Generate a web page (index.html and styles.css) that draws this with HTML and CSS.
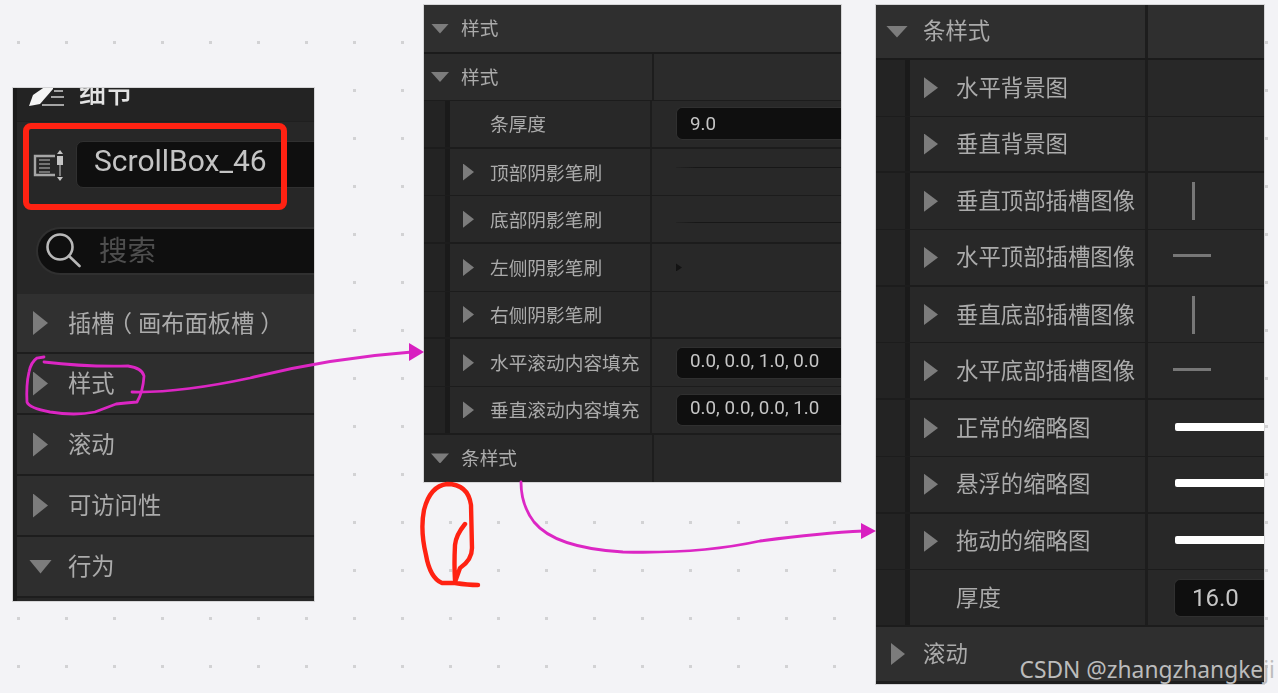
FILE: index.html
```html
<!DOCTYPE html>
<html lang="zh-CN">
<head>
<meta charset="utf-8">
<title>ScrollBox 样式</title>
<link rel="stylesheet" href="styles.css">
</head>
<body>
<main class="canvas">

  <section class="panel details">
    <header class="details-head">
      <svg class="edit-icon" viewBox="0 0 36 22" width="36" height="22"><path class="fill-white" d="M0 20 L4 9 L17 0 L24 0 L24 3 L11 18 L3 19.5 Z"/><path class="line-dim" d="M25 5H34M22 11H35M13 19H35"/></svg>
      <span class="details-title">细节</span>
    </header>
    <div class="name-row">
      <svg class="name-icon" viewBox="0 0 32 32" width="32" height="32"><path class="line-soft" d="M23 6H3V25H23"/><path class="line-soft thin" d="M7 10H18M7 14H18M7 18H18M7 22H18"/><rect class="fill-soft" x="25" y="6" width="6" height="9"/><path class="fill-soft" d="M28 0L31 4H25ZM28 31L31 27H25Z"/><path class="line-soft thin" d="M28 15V26"/></svg>
      <div class="name-field">ScrollBox_46</div>
    </div>
    <div class="search-row">
      <div class="search-field">
        <svg class="search-icon" viewBox="0 0 36 36" width="36" height="36"><circle class="search-ring" cx="15" cy="14" r="12.5"/><path class="search-ring" d="M24 23L34.5 33"/></svg>
        <span class="search-text">搜索</span>
      </div>
    </div>
    <div class="section first"><i class="tri-r"></i><span>插槽<em class="paren open">（</em>画布面板槽<em class="paren close">）</em></span></div>
    <div class="section"><i class="tri-r"></i><span>样式</span></div>
    <div class="section"><i class="tri-r"></i><span>滚动</span></div>
    <div class="section"><i class="tri-r"></i><span>可访问性</span></div>
    <div class="section"><i class="tri-d"></i><span>行为</span></div>
  </section>

  <section class="panel style-panel">
    <div class="row head full"><div class="label"><i class="tri-d"></i><span>样式</span></div></div>
    <div class="row sub"><div class="label"><i class="tri-d"></i><span>样式</span></div><div class="value"></div></div>
    <div class="row thick"><b class="gutter"></b><div class="label inner"><span>条厚度</span></div><div class="value"><div class="field">9.0</div></div></div>
    <div class="row"><b class="gutter"></b><div class="label inner"><i class="tri-r"></i><span>顶部阴影笔刷</span></div><div class="value"><hr class="shade top"></div></div>
    <div class="row thick"><b class="gutter"></b><div class="label inner"><i class="tri-r"></i><span>底部阴影笔刷</span></div><div class="value"><hr class="shade bottom"></div></div>
    <div class="row"><b class="gutter"></b><div class="label inner"><i class="tri-r"></i><span>左侧阴影笔刷</span></div><div class="value"><i class="shade-tip"></i></div></div>
    <div class="row thick"><b class="gutter"></b><div class="label inner"><i class="tri-r"></i><span>右侧阴影笔刷</span></div><div class="value"></div></div>
    <div class="row"><b class="gutter"></b><div class="label inner"><i class="tri-r"></i><span>水平滚动内容填充</span></div><div class="value"><div class="field padded">0.0, 0.0, 1.0, 0.0</div></div></div>
    <div class="row thick"><b class="gutter"></b><div class="label inner"><i class="tri-r"></i><span>垂直滚动内容填充</span></div><div class="value"><div class="field padded">0.0, 0.0, 0.0, 1.0</div></div></div>
    <div class="row sub last"><div class="label"><i class="tri-d"></i><span>条样式</span></div><div class="value"></div></div>
  </section>

  <section class="panel bar-panel">
    <div class="row head"><div class="label"><i class="tri-d"></i><span>条样式</span></div><div class="value"></div></div>
    <div class="row"><b class="gutter"></b><div class="label inner"><i class="tri-r"></i><span>水平背景图</span></div><div class="value"></div></div>
    <div class="row thick"><b class="gutter"></b><div class="label inner"><i class="tri-r"></i><span>垂直背景图</span></div><div class="value"></div></div>
    <div class="row"><b class="gutter"></b><div class="label inner"><i class="tri-r"></i><span>垂直顶部插槽图像</span></div><div class="value"><i class="slot-v"></i></div></div>
    <div class="row thick"><b class="gutter"></b><div class="label inner"><i class="tri-r"></i><span>水平顶部插槽图像</span></div><div class="value"><i class="slot-h"></i></div></div>
    <div class="row"><b class="gutter"></b><div class="label inner"><i class="tri-r"></i><span>垂直底部插槽图像</span></div><div class="value"><i class="slot-v"></i></div></div>
    <div class="row thick"><b class="gutter"></b><div class="label inner"><i class="tri-r"></i><span>水平底部插槽图像</span></div><div class="value"><i class="slot-h"></i></div></div>
    <div class="row"><b class="gutter"></b><div class="label inner"><i class="tri-r"></i><span>正常的缩略图</span></div><div class="value"><i class="thumb"></i></div></div>
    <div class="row thick"><b class="gutter"></b><div class="label inner"><i class="tri-r"></i><span>悬浮的缩略图</span></div><div class="value"><i class="thumb"></i></div></div>
    <div class="row"><b class="gutter"></b><div class="label inner"><i class="tri-r"></i><span>拖动的缩略图</span></div><div class="value"><i class="thumb"></i></div></div>
    <div class="row thick"><b class="gutter"></b><div class="label inner"><span>厚度</span></div><div class="value"><div class="field">16.0</div></div></div>
    <div class="row head foot full"><div class="label"><i class="tri-r"></i><span>滚动</span></div></div>
  </section>

  <svg class="marks" viewBox="0 0 1278 693" width="1278" height="693">
    <rect class="red-box" x="26" y="126" width="258" height="81" rx="5"/>
    <path class="pink" d="M44 357 L37 358 Q31 362 29 372 Q26 385 27 402 Q29 408 50 412 Q75 416 95 412 Q108 407 116 404 Q125 403 137 402 Q143 392 144 376 Q142 368 128 366 Q85 367 44 362"/>
    <path class="pink" d="M132 392 Q180 393 250 378 Q330 358 412 352"/>
    <path class="pink-head" d="M409 343 L424 352 L409 361 Z"/>
    <path class="pink" d="M521 482 Q521 505 534 522 Q555 548 623 552 Q700 554 760 541 Q820 533 864 531"/>
    <path class="pink-head" d="M861 523 L876 531 L861 539 Z"/>
    <path class="red-pen" d="M465 524 Q456 535 455 545 Q454 565 455 580 M472 548 Q472 560 460 568 L455 582 M442 583 Q430 578 426 555 Q420 530 424 510 Q430 486 447 484 Q468 484 471 505 L472 548 M442 583 L455 583 Q468 585 478 585"/>
  </svg>

  <div class="watermark">CSDN @zhangzhangkeji</div>
</main>
</body>
</html>
```

FILE: styles.css
```css
* { box-sizing: border-box; }
html, body { margin: 0; height: 100%; overflow: hidden; }
body { font-family: "Noto Sans CJK SC", "Noto Sans", sans-serif; }

.canvas {
  position: relative;
  width: 1278px;
  height: 693px;
  overflow: hidden;
  background-color: #f3f3f6;
  background-image: conic-gradient(from 0deg at 3px 3px, transparent 75%, #d2d2d4 0);
  background-size: 48px 48px;
  background-position: 17px 41px;
}

.panel {
  position: absolute;
  overflow: hidden;
  display: flex;
  flex-direction: column;
  background: #282828;
  color: #ababab;
  filter: blur(.35px);
  outline: 1px solid #9a9a9a55;
}

/* triangles */
.tri-r, .tri-d { display: block; flex: none; background: #7c7c7c; }
.tri-r { clip-path: polygon(0 0, 100% 50%, 0 100%); }
.tri-d { clip-path: polygon(0 0, 100% 0, 50% 100%); }

/* details panel */
.details {
  left: 13px; top: 88px; width: 301px; height: 513px;
  border-left: 4px solid #1b1b1b;
  background: #272727;
}
.details-head {
  height: 34px; flex: none;
  display: flex; align-items: flex-end;
  padding: 0 0 14px 12px;
  border-bottom: 1px solid #1f1f1f;
  background: #232323;
  color: #e4e4e4;
}
.edit-icon { flex: none; margin-bottom: -1px; }
.fill-white { fill: #f4f4f4; }
.line-dim { fill: none; stroke: #a4a4a4; stroke-width: 2.2; }
.details-title { margin-left: 14px; font-size: 27px; line-height: 27px; font-weight: 500; padding-bottom: 2px; }

.name-row { height: 85px; flex: none; display: flex; align-items: flex-start; padding: 19px 0 0 15px; }
.name-icon { flex: none; margin: 9px 12px 0 0; }
.line-soft { fill: none; stroke: #a6a6a6; stroke-width: 2.4; }
.line-soft.thin { stroke-width: 1.6; stroke: #8d8d8d; }
.fill-soft { fill: #c4c4c4; }
.name-field {
  flex: 1; height: 47px;
  margin-right: -6px;
  border: 1px solid #303030; border-radius: 7px 0 0 7px;
  background: #0f0f0f;
  padding-left: 17px;
  font: 400 30px/38px Roboto, sans-serif;
  color: #c4c4c4;
}

.search-row { height: 87px; flex: none; padding: 20px 0 0 19px; }
.search-field {
  height: 48px; margin-right: -4px;
  display: flex; align-items: center;
  padding-left: 7px;
  border: 2px solid #303030; border-right: 0;
  border-radius: 24px 0 0 24px;
  background: #0f0f0f;
}
.search-icon { flex: none; }
.search-ring { fill: none; stroke: #b8b8b8; stroke-width: 2.6; stroke-linecap: round; }
.search-text { margin-left: 18px; font-size: 28.5px; color: #4e4e4e; line-height: 1; padding-bottom: 4px; }

.section {
  height: 61px; flex: none;
  display: flex; align-items: center;
  padding-left: 16px;
  border-bottom: 2px solid #1d1d1d;
  background: #2e2e2e;
  font-size: 23.3px;
}
.section.first { height: 60px; background: #303030; }
.section .tri-r { width: 15px; height: 24px; }
.section .tri-d { width: 23px; height: 14px; margin-left: -4px; margin-right: -4px; }
.section span { margin-left: 20px; padding-bottom: 4px; white-space: nowrap; text-spacing-trim: space-all; }
.section.first span { padding-bottom: 2px; }
.paren { font-style: normal; text-spacing-trim: space-all; }
.paren.open { margin: 0 .25em 0 -.25em; }
.paren.close { margin: 0 -.25em 0 .25em; }

/* property rows */
.row { display: flex; flex: none; border-bottom: 1px solid #1c1c1c; }
.row.thick { border-bottom-width: 2px; }
.row.last { border-bottom: 0; }
.row.head { background: #2f2f2f; border-bottom: 2px solid #1b1b1b; }
.row .gutter { flex: none; background: #232323; border-right: solid #1a1a1a; }
.label { display: flex; align-items: center; flex: none; border-right: 2px solid #1d1d1d; }
.row.full .label { border-right: 0; }
.value { flex: 1; min-width: 0; position: relative; display: flex; align-items: center; }

.field {
  width: 100%;
  background: #0f0f0f;
  border: 1px solid #303030;
  border-right: 0;
  border-radius: 6px 0 0 6px;
  font-family: Roboto, sans-serif;
  color: #c6c6c6;
}

/* style panel */
.style-panel { left: 424px; top: 5px; width: 417px; height: 477px; font-size: 18.7px; }
.style-panel .row { height: 47.7px; }
.style-panel .row.head { height: 49px; }
.style-panel .row.sub { height: 47px; background: #2b2b2b; }
.style-panel .row.last { background: #282828; flex: 1; }
.style-panel .gutter { width: 26px; border-right-width: 5px; }
.style-panel .label { width: 228px; padding-left: 7px; }
.style-panel .label .tri-d { width: 18px; height: 10px; }
.style-panel .label > span { margin-left: 12px; padding-bottom: 2px; }
.style-panel .row.head .label > span, .style-panel .row.sub .label > span { padding-bottom: 4px; }
.style-panel .row.head .label, .style-panel .row.sub .label { width: 230px; }
.style-panel .inner { width: 202px !important; padding-left: 13px; }
.style-panel .inner .tri-r { width: 11px; height: 17px; }
.style-panel .inner > span { margin-left: 16px; }
.style-panel .inner > span:first-child { margin-left: 27px; }
.style-panel .value { padding-left: 24px; }
.style-panel .field { height: 33px; padding-left: 13px; font-size: 18.8px; line-height: 33px; }
.style-panel .field.padded { height: 32px; line-height: 26px; }
.shade { position: absolute; left: 24px; right: 0; height: 1px; margin: 0; border: 0; background: linear-gradient(90deg, #232323, #171717 20px); }
.shade.top { top: 18px; }
.shade.bottom { top: 26px; }
.shade-tip { display: block; width: 6px; height: 8px; background: #131313; clip-path: polygon(0 0, 100% 50%, 0 100%); }

/* bar panel */
.bar-panel { left: 876px; top: 5px; width: 388px; height: 679px; font-size: 22.4px; background: #1e1e1e; }
.bar-panel .row { height: 56.7px; }
.bar-panel .row.head { height: 55px; }
.bar-panel .row.foot { height: 54px; border-bottom: 0; }
.bar-panel .gutter { width: 34px; border-right-width: 5px; }
.bar-panel .row { background: #282828; }
.bar-panel .row.head { background: #2f2f2f; }
.bar-panel .label { width: 272px; padding-left: 10px; border-right-width: 3px; }
.bar-panel .label .tri-d { width: 22px; height: 12px; }
.bar-panel .label > span { margin-left: 15px; padding-bottom: 5px; }
.bar-panel .row.foot .tri-r { width: 14px; height: 22px; margin-left: 5px; }
.bar-panel .row.foot .label > span { margin-left: 18px; padding-bottom: 3px; }
.bar-panel .inner { width: 238px !important; padding-left: 14px; }
.bar-panel .inner .tri-r { width: 14px; height: 21px; }
.bar-panel .inner > span { margin-left: 18px; padding-bottom: 4px; }
.bar-panel .inner > span:first-child { margin-left: 32px; }
.bar-panel .value { padding-left: 26px; }
.bar-panel .field { height: 38px; padding-left: 17px; font-size: 24px; line-height: 36px; }
.slot-v { display: block; width: 3px; height: 38px; margin-left: 18px; background: #777; }
.slot-h { display: block; width: 38px; height: 3px; background: #777; margin: -3px 0 0 -1px; }
.thumb { display: block; width: 100%; height: 8px; background: #fff; border-radius: 2px 0 0 2px; margin: -2px 0 0 1px; }

/* annotations */
.marks { position: absolute; left: 0; top: 0; pointer-events: none; }
.red-box { fill: none; stroke: #ff2212; stroke-width: 6; }
.pink { fill: none; stroke: #dc26c4; stroke-width: 2.8; stroke-linecap: round; }
.pink-head { fill: #d81fc0; }
.red-pen { fill: none; stroke: #ff2212; stroke-width: 4.4; stroke-linecap: round; stroke-linejoin: round; }

.watermark {
  position: absolute; right: 3px; top: 656px;
  font-family: "Noto Sans", sans-serif;
  font-size: 22.8px; line-height: 28px;
  color: #bcbcbc;
  white-space: nowrap;
}
```
